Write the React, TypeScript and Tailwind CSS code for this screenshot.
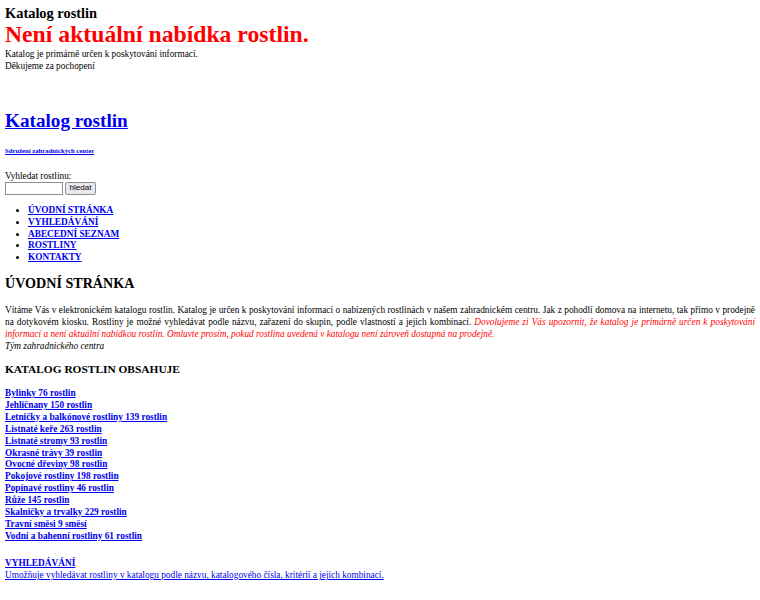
import React from "react";

const categories = [
  "Bylinky 76 rostlin",
  "Jehličnany 150 rostlin",
  "Letničky a balkónové rostliny 139 rostlin",
  "Listnaté keře 263 rostlin",
  "Listnaté stromy 93 rostlin",
  "Okrasné trávy 39 rostlin",
  "Ovocné dřeviny 98 rostlin",
  "Pokojové rostliny 198 rostlin",
  "Popínavé rostliny 46 rostlin",
  "Růže 145 rostlin",
  "Skalničky a trvalky 229 rostlin",
  "Travní směsi 9 směsí",
  "Vodní a bahenní rostliny 61 rostlin",
];

const menu = ["ÚVODNÍ STRÁNKA", "VYHLEDÁVÁNÍ", "ABECEDNÍ SEZNAM", "ROSTLINY", "KONTAKTY"];

export default function App() {
  return (
    <div className="min-h-[600px] bg-white px-[5px] pt-[5px] font-['Liberation_Serif','Times_New_Roman',serif] text-[9.3px] leading-[12px] text-black">
      <div className="text-[14.4px] font-bold leading-[16px]">Katalog rostlin</div>
      <div className="text-[23.7px] font-bold leading-[27px] text-[#ff0000]">Není aktuální nabídka rostlin.</div>
      <div className="leading-[12px]">Katalog je primárně určen k poskytování informací.</div>
      <div className="leading-[12.5px]">Děkujeme za pochopení</div>

      <h1 className="mt-[37px] text-[19.2px] font-bold leading-[22px]">
        <a href="#" className="text-[#0000ee] underline">Katalog rostlin</a>
      </h1>
      <h6 className="mt-[15.5px] text-[6.7px] font-bold leading-[8px]">
        <a href="#" className="text-[#0000ee] underline">Sdružení zahradnických center</a>
      </h6>

      <div className="mt-[14.5px] leading-[12px]">Vyhledat rostlinu:</div>
      <div className="flex h-[13px] items-stretch gap-[2px]">
        <input className="h-[13px] w-[58px] border-[1.5px] border-[#8f8f8f] bg-white" />
        <button className="flex h-[13px] w-[31px] items-center justify-center rounded-[2px] border border-[#8f8f8f] bg-[#e9e9ed] font-['Liberation_Sans',Arial,sans-serif] text-[8px] leading-none text-black">
          hledat
        </button>
      </div>

      <ul className="mt-[10.5px] list-disc pl-[23px]">
        {menu.map((m) => (
          <li key={m} className="leading-[11.8px]">
            <a href="#" className="font-bold text-[#0000ee] underline">{m}</a>
          </li>
        ))}
      </ul>

      <h2 className="mt-[11.5px] text-[14.1px] font-bold leading-[16px]">ÚVODNÍ STRÁNKA</h2>
      <p className="mt-[14px] text-justify leading-[11.8px]">
        Vítáme Vás v elektronickém katalogu rostlin. Katalog je určen k poskytování informací o nabízených rostlinách v našem zahradnickém centru. Jak z pohodlí domova na internetu, tak přímo v prodejně na dotykovém kiosku. Rostliny je možné vyhledávat podle názvu, zařazení do skupin, podle vlastností a jejich kombinací.{" "}
        <span className="italic text-[#ff0000]">
          Dovolujeme zi Vás upozornit, že katalog je primárně určen k poskytování informací a není aktuální nabídkou rostlin. Omluvte prosím, pokud rostlina uvedená v katalogu není zároveň dostupná na prodejně.
        </span>
        <br />
        <span className="italic">Tým zahradnického centra</span>
      </p>

      <h3 className="mt-[10px] text-[11.4px] font-bold leading-[13px]">KATALOG ROSTLIN OBSAHUJE</h3>
      <div className="mt-[12.3px] flex flex-col items-start">
        {categories.map((c) => (
          <a key={c} href="#" className="font-bold leading-[11.9px] text-[#0000ee] underline">{c}</a>
        ))}
      </div>

      <div className="mt-[14.4px] flex flex-col items-start">
        <a href="#" className="font-bold leading-[12px] text-[#0000ee] underline">VYHLEDÁVÁNÍ</a>
        <a href="#" className="leading-[12px] text-[#0000ee] underline">Umožňuje vyhledávat rostliny v katalogu podle názvu, katalogového čísla, kritérií a jejich kombinací.</a>
      </div>
    </div>
  );
}
